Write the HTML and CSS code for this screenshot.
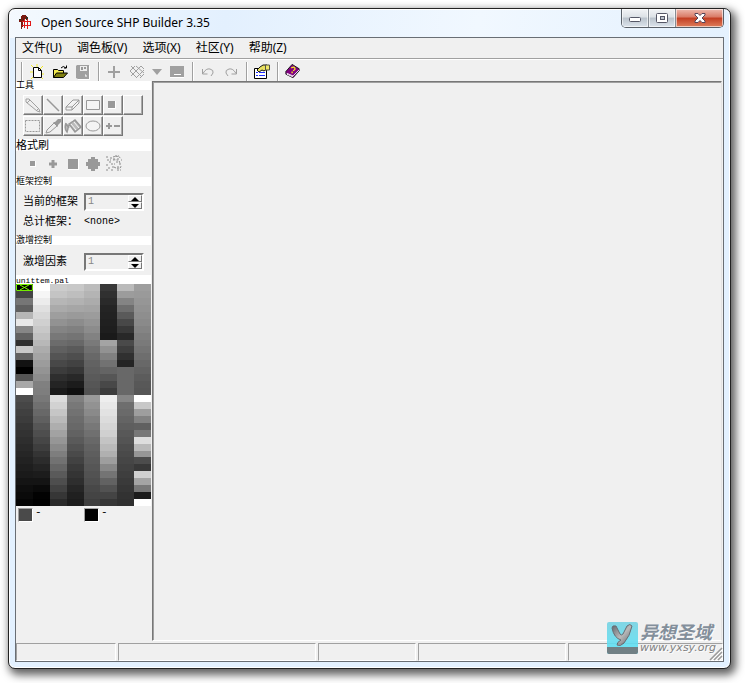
FILE: index.html
```
<!DOCTYPE html>
<html lang="zh-CN">
<head>
<meta charset="utf-8">
<title>Open Source SHP Builder 3.35</title>
<link rel="stylesheet" href="styles.css">
</head>
<body>
<div class="window">
  <header class="titlebar">
    <svg class="app-icon" width="16" height="16" viewBox="0 0 16 16" shape-rendering="crispEdges"><path fill="#7a1a10" d="M4 1h4v1h1v3H6v2H5v6H4v2H3V8H1V5h2V2h1z"/><path fill="#332" d="M1 5h2v1H1zM5 5h2v1H5zM8 3h2v3H8z"/><path fill="#e01818" d="M4 7h9v1H4zM4 11h9v1H4zM6 5h1v9H6zM9 5h1v10H9zM12 7h1v5h-1z"/></svg>
    <h1>Open Source SHP Builder 3.35</h1>
    <div class="caption">
      <button class="cap-button" aria-label="Minimize"><svg width="14" height="10" viewBox="0 0 14 10"><rect x="1.500" y="4.500" width="11" height="4" rx="1" fill="#fff" stroke="#555766"/></svg></button>
      <button class="cap-button" aria-label="Maximize"><svg width="14" height="12" viewBox="0 0 14 12"><rect x="1.500" y="1.500" width="11" height="9" rx="1" fill="#fff" stroke="#555766"/><rect x="5.500" y="4.500" width="4" height="3" fill="#bcc3cc" stroke="#555766"/></svg></button>
      <button class="cap-button close" aria-label="Close"><svg width="14" height="12" viewBox="0 0 14 12"><path d="M2 1.500h3l2 2 2-2h3v1.500l-3 3 3 3v1.500H9l-2-2-2 2H2V9l3-3-3-3z" fill="#fff" stroke="#554458"/></svg></button>
    </div>
  </header>
  <div class="client">
    <nav class="menu">
      <button>文件(U)</button><button>调色板(V)</button><button>选项(X)</button><button>社区(Y)</button><button>帮助(Z)</button>
    </nav>
    <div class="toolbar">
      <div class="group">
        <button aria-label="New"><svg width="16" height="16" viewBox="0 0 16 16"><path d="M2 1l3 3M8 0v3M14 2l-3 3M1 8h3M12 10h3M2 15l2-2M14 15l-2-2" stroke="#f4ec28"/><path d="M4.500 3.500h5l3 3v7h-8z" fill="#fff" stroke="#000"/><path d="M9.500 3.500v3h3" fill="none" stroke="#000"/></svg></button>
        <button aria-label="Open"><svg width="16" height="16" viewBox="0 0 16 16"><path d="M1.500 13.500v-8h4l1 1h5v3" fill="#f4ec50" stroke="#000"/><path d="M1.500 13.500l3-4.500h11l-4 4.500z" fill="#808010" stroke="#000"/><path d="M9 4q2-3 5 0M12 4h2.500V1.500" fill="none" stroke="#000"/></svg></button>
        <button aria-label="Save"><svg width="16" height="16" viewBox="0 0 16 16"><path d="M1 2l1-1h12v14H3l-2-1z" fill="#a0a0a0"/><path d="M5 2h7v5H5z" fill="#eee"/><path d="M6 3h2v3H6zM9 3h2v2H9z" fill="#999"/><path d="M14.500 2v13.500H3M10 11h1v2" fill="none" stroke="#fff"/></svg></button>
      </div>
      <div class="group">
        <button aria-label="Add"><svg width="16" height="16" viewBox="0 0 16 16"><path d="M8 2v12M2 8h12" stroke="#a0a0a0" stroke-width="2"/></svg></button>
        <button aria-label="Grid"><svg width="16" height="16" viewBox="0 0 16 16"><path d="M1 7l6 6M2 2l11 11M7 2l8 7M12 2l3 3M2 12L12 2M1 7l5-5M7 14l8-8M11 14l4-4" fill="none" stroke="#a0a0a0"/></svg></button>
        <button class="narrow" aria-label="Grid options"><svg width="12" height="16" viewBox="0 0 12 16"><path d="M1 5h10L6 11z" fill="#a0a0a0"/></svg></button>
        <button aria-label="Preview"><svg width="16" height="16" viewBox="0 0 16 16"><path d="M1 2h14v11H1z" fill="#a0a0a0"/><path d="M5 10.500h7M1 13.500h14" stroke="#fff"/></svg></button>
      </div>
      <div class="group">
        <button aria-label="Undo"><svg width="16" height="16" viewBox="0 0 16 16"><path d="M2.500 5v5h5M3 9.500Q6 4 10 5t3 4l-2 3" fill="none" stroke="#a0a0a0"/></svg></button>
        <button aria-label="Redo"><svg width="16" height="16" viewBox="0 0 16 16"><path d="M13.500 5v5h-5M13 9.500Q10 4 6 5T3 9l2 3" fill="none" stroke="#a0a0a0"/></svg></button>
      </div>
      <div class="group">
        <button aria-label="Preferences"><svg width="16" height="16" viewBox="0 0 16 16"><path d="M.5 4.500h12v10H.5z" fill="#fff" stroke="#000"/><path d="M2 8.500h2M5 8.500h6M2 11.500h2M5 11.500h6" stroke="#2030ff"/><path d="M3 6l3-3 3-2h4v4l-3 2-2-1-3 2z" fill="#e8e060" stroke="#111"/><path d="M11.500 1h4v5h-4z" fill="#f0e868" stroke="#554"/></svg></button>
      </div>
      <div class="group">
        <button aria-label="Help"><svg width="16" height="17" viewBox="0 0 18 18"><path d="M1 9l7-8 8 5v2l-7 8-8-4z" fill="#800080" stroke="#111"/><path d="M2 11l7 3 7-7M2 12l7 3" fill="none" stroke="#fff"/><path d="M7 5q3-2 4 0t-2 3M8 9v2" fill="none" stroke="#f8e820" stroke-width="1.500"/></svg></button>
      </div>
    </div>
    <main class="work">
      <aside class="side">
        <h2>工具</h2>
        <div class="tools">
          <button aria-label="Pencil"><svg width="18" height="16" viewBox="0 0 18 16"><path d="M2 2l3 0 10 10 1 3-3-1L2 5zM3 6l3-3M12 14l3-3" fill="#eee" stroke="#a0a0a0"/></svg></button>
          <button aria-label="Line"><svg width="18" height="16" viewBox="0 0 18 16"><path d="M3 2l12 12" stroke="#999" stroke-width="1.500"/></svg></button>
          <button aria-label="Eraser"><svg width="18" height="16" viewBox="0 0 18 16"><path d="M2 10l7-7h6v3l-7 7H2zM2 10h6l7-7M8 10v3" fill="#f4f4f4" stroke="#999"/></svg></button>
          <button aria-label="Rectangle"><svg width="18" height="16" viewBox="0 0 18 16"><path d="M2.500 3.500h13v9h-13z" fill="#f4f4f4" stroke="#999"/></svg></button>
          <button aria-label="Filled rectangle"><svg width="18" height="16" viewBox="0 0 18 16"><path d="M4 4h7v7H4z" fill="#999"/><path d="M4 11.500h7.500V4" fill="none" stroke="#fff"/></svg></button>
          <button aria-label="Blank"></button>
          <button aria-label="Select"><svg width="18" height="16" viewBox="0 0 18 16"><path d="M1.500 2.500h14v11h-14z" fill="none" stroke="#999" stroke-dasharray="2 1"/></svg></button>
          <button aria-label="Picker"><svg width="18" height="16" viewBox="0 0 18 16"><path d="M2 15l1-3 7-7 3 3-7 6z" fill="#eee" stroke="#999"/><path d="M9 4l2 0 3-3h3v3l-3 3v2z" fill="#999"/></svg></button>
          <button aria-label="Fill"><svg width="18" height="16" viewBox="0 0 18 16"><path d="M5 6l6-4 6 7-6 5zM2 6l3 4M2 5q-2 6 1 9l2-7" fill="#bbb" stroke="#999" stroke-width="1.500"/><path d="M7 6l5 6M10 4l5 6M4 2h5" stroke="#f8f8f8"/></svg></button>
          <button aria-label="Ellipse"><svg width="18" height="16" viewBox="0 0 18 16"><ellipse cx="9" cy="8" rx="7" ry="5" fill="#f4f4f4" stroke="#999"/></svg></button>
          <button aria-label="Lighten or darken"><svg width="18" height="16" viewBox="0 0 18 16"><path d="M2 8h6M5 5v6M10 8h6" stroke="#999" stroke-width="2"/></svg></button>
        </div>
        <h2 class="large">格式刷</h2>
        <div class="brushes">
          <button aria-label="Small brush"><svg width="16" height="16" viewBox="0 0 16 16"><path d="M5 5h6v6H5z" fill="#fff"/><path d="M5 5h5v5H5z" fill="#999"/></svg></button>
          <button aria-label="Cross brush"><svg width="16" height="16" viewBox="0 0 16 16"><path d="M8 4v8M4 8h8" stroke="#999" stroke-width="3"/></svg></button>
          <button aria-label="Square brush"><svg width="16" height="16" viewBox="0 0 16 16"><path d="M3 3h11v11H3z" fill="#fff"/><path d="M3 3h10v10H3z" fill="#999"/></svg></button>
          <button aria-label="Round brush"><svg width="16" height="16" viewBox="0 0 16 16"><path d="M6 1h4v2h3v3h2v4h-2v3h-3v2H6v-2H3v-3H1V6h2V3h3z" fill="#999"/></svg></button>
          <button aria-label="Spray brush"><svg width="18" height="18" viewBox="0 0 18 18"><path d="M1 2h2m2 1h3m2-2h4M2 5h4m2-1h2m2 0h3m1 1h1M4 7h3m4 0h4M1 10h2m3-1h4m4 0h3M3 13h2m2-1h3m2 0h4M1 15h3m2 0h2m4 0h4M8 2q6-2 8 2M8 5q7-1 7 4M9 12q5 3 8-1" fill="none" stroke="#8c8c8c" stroke-dasharray="2 1"/></svg></button>
        </div>
        <h2>框架控制</h2>
        <div class="fields">
          <label for="frame">当前的框架</label>
          <div class="spin"><input id="frame" value="1"><span class="arrows"><button aria-label="Next frame"><i class="up"></i></button><button aria-label="Previous frame"><i class="down"></i></button></span></div>
          <span>总计框架：</span><output>&lt;none&gt;</output>
        </div>
        <h2>激增控制</h2>
        <div class="fields single">
          <label for="zoom">激增因素</label>
          <div class="spin"><input id="zoom" value="1"><span class="arrows"><button aria-label="Zoom in"><i class="up"></i></button><button aria-label="Zoom out"><i class="down"></i></button></span></div>
        </div>
        <h2 class="file">unittem.pal</h2>
        <div class="palette" id="palette"></div>
        <div class="colours"><div><i class="swatch"></i><span>-</span></div><div><i class="swatch dark"></i><span>-</span></div></div>
      </aside>
      <section class="canvas" aria-label="Canvas"></section>
    </main>
    <footer class="status"><span></span><span></span><span></span><span></span><span></span>
      <svg class="grip" width="14" height="14" viewBox="0 0 14 14"><path d="M1 13L13 1M5 13l8-8M9 13l4-4" stroke="#999" stroke-width="1.500"/><path d="M3 13L13 3M7 13l6-6M11 13l2-2" stroke="#fff"/></svg>
    </footer>
    <div class="watermark">
      <svg width="31" height="32" viewBox="0 0 31 32"><defs><linearGradient id="sky" x2="0" y2="1"><stop stop-color="#77d3e3"/><stop offset="1" stop-color="#58e4f8"/></linearGradient><linearGradient id="steel" x2="1" y2="1"><stop stop-color="#50545c"/><stop offset=".5" stop-color="#b4b4b4"/><stop offset="1" stop-color="#50545c"/></linearGradient></defs><rect width="31" height="32" rx="2" fill="url(#sky)"/><path d="M0 25h31v5q0 2-2 2H2q-2 0-2-2z" fill="#64747a"/><path d="M5 6q0-3 4-2l4 8q1 2 3 0l4-8q3-3 5 0-2 10-8 17-4 4-7 2 0-3 4-5-7-2-9-12z" fill="url(#steel)" stroke="#596068"/></svg>
      <div><b>异想圣域</b><em>www.yxsy.org</em></div>
    </div>
  </div>
</div>
<script src="palette.js"></script>
</body>
</html>
```
FILE: styles.css
```
* { box-sizing: border-box; }
html, body { height: 100%; margin: 0; }
body {
  display: flex;
  padding: 8px 14px 14px 8px;
  overflow: hidden;
  background: #fff;
  color: #000;
  font: 12px/16px "Noto Sans", "Noto Sans CJK SC", sans-serif;
}
button {
  display: flex;
  align-items: center;
  justify-content: center;
  padding: 0;
  border: 0;
  background: none;
  color: inherit;
  font: inherit;
}
svg { display: block; flex: none; }
.window {
  flex: 1;
  display: flex;
  flex-direction: column;
  min-width: 0;
  padding: 0 6px 6px;
  border: 1px solid #222;
  border-radius: 7px;
  background: linear-gradient(100deg, #f4f9fe, #e3f0fe 30%, #f1f8ff 65%, #e4f1fe) 0 0 / 100% 29px no-repeat, #e3f1ff;
  box-shadow: inset 0 0 0 1px #fff, 3px 4px 9px 2px rgba(0, 0, 0, .62);
}
.titlebar { display: flex; align-items: flex-start; height: 28px; }
.app-icon { margin: 5px 7px 0 3px; }
h1 { flex: 1; margin: 6px 0 0; font: 12px/16px "Noto Sans", sans-serif; }
.caption {
  display: flex;
  border: 1px solid #596068;
  border-top: 0;
  border-radius: 0 0 5px 5px;
  overflow: hidden;
}
.cap-button {
  width: 27px;
  height: 18px;
  border-right: 1px solid #858c94;
  background: linear-gradient(#f2f4f6, #dce1e6 45%, #bac3cc 50%, #dce4ec);
  box-shadow: inset 0 0 0 1px rgba(255, 255, 255, .6);
}
.cap-button.close {
  width: 47px;
  border: 0;
  background: linear-gradient(#eebbb0, #d97965 45%, #c23d22 50%, #df7e5c);
}
.client {
  position: relative;
  flex: 1;
  display: flex;
  flex-direction: column;
  min-height: 0;
  border: 1px solid #696e74;
  background: #f0f0f0;
}
.menu {
  display: flex;
  gap: 15px;
  height: 21px;
  padding-left: 6px;
  border-bottom: 1px solid #a0a0a0;
}
.toolbar {
  display: flex;
  height: 22px;
  padding: 2px 0 0 5px;
  border-top: 1px solid #fff;
}
.group {
  display: flex;
  align-items: center;
  gap: 7px;
  height: 19px;
  padding: 0 7px;
  border-left: 1px solid #a0a0a0;
  box-shadow: inset 1px 0 #fff;
}
.narrow { margin: 0 -1px; }
.work { flex: 1; display: flex; min-height: 0; }
.side {
  flex: 0 0 135px;
  margin-right: 1px;
  font: 11px/12px "Liberation Mono", "Noto Sans CJK SC", monospace;
}
h2 {
  height: 9px;
  margin: 0;
  background: #fff;
  font: 9px/11px "Liberation Mono", "Noto Sans CJK SC", monospace;
}
h2.large { height: 12px; font-size: 11px; line-height: 14px; }
h2.file { font-family: "Liberation Mono", monospace; font-size: 8px; line-height: 11px; }
.tools {
  display: grid;
  grid-template-columns: repeat(6, 20px);
  grid-auto-rows: 20px;
  gap: 1px 0;
  height: 49px;
  padding: 5px 0 0 7px;
}
.tools button {
  border: 1px solid;
  border-color: #fff #777 #777 #fff;
  box-shadow: inset -1px -1px #a9a9a9;
}
.brushes { display: flex; align-items: center; gap: 4px; height: 26px; padding-left: 9px; }
.fields {
  display: grid;
  grid-template-columns: 61px 60px;
  grid-template-rows: 18px 22px;
  align-items: center;
  height: 50px;
  padding: 7px 0 0 7px;
}
.fields output { font-size: 10px; }
.fields.single { height: 30px; padding-top: 8px; }
.spin {
  display: flex;
  height: 18px;
  border: 2px solid;
  border-color: #777 #fff #fff #777;
}
.spin input {
  flex: 1;
  min-width: 0;
  padding: 0 2px;
  border: 0;
  background: #f0f0f0;
  color: #888;
  font: 10px/14px "Liberation Mono", monospace;
}
.arrows { display: grid; grid-template-rows: 1fr 1fr; width: 14px; }
.arrows button { border: 1px solid; border-color: #fff #777 #777 #fff; }
.up, .down { border: solid transparent; border-width: 0 4px; }
.up { border-bottom: 4px solid #000; }
.down { border-top: 4px solid #000; }
.palette {
  display: grid;
  grid-template-columns: repeat(8, 1fr);
  grid-template-rows: repeat(32, 1fr);
  grid-auto-flow: column;
  height: 222px;
}
.palette svg { width: 100%; height: 100%; }
.colours { display: flex; padding: 2px 0 0 2px; }
.colours div { display: flex; gap: 2px; width: 66px; line-height: 9px; }
.swatch {
  width: 15px;
  height: 14px;
  border: 1px solid;
  border-color: #a0a0a0 #fff #fff #a0a0a0;
  background: #4a4a4a;
}
.swatch.dark { background: #000; }
.canvas {
  flex: 1;
  border: 1px solid;
  border-color: #777 #e3e3e3 #fff #777;
  box-shadow: inset 1px 1px #a0a0a0;
  margin-right: 1px;
}
.status {
  display: grid;
  grid-template-columns: 100px 198px 98px 148px 1fr;
  gap: 2px;
  height: 20px;
  padding: 2px 0 0;
}
.status span { border: 1px solid; border-color: #a0a0a0 #fff #fff #a0a0a0; }
.grip { position: absolute; right: 0; bottom: 0; }
.watermark {
  position: absolute;
  right: 7px;
  bottom: 6px;
  display: flex;
  gap: 2px;
  opacity: .9;
}
.watermark div { display: flex; flex-direction: column; }
.watermark b {
  color: #788592;
  font: italic bold 18px/19px "Noto Sans CJK SC", sans-serif;
  text-shadow: 1px 1px #fff;
}
.watermark em { color: #777; font: italic 11px/14px "DejaVu Sans", sans-serif; text-shadow: 1px 1px #fff; }
```
FILE: palette.js
```
// Grey levels of the palette, one list per column, top to bottom.
const columns = [
  [0,68,118,96,182,232,134,98,48,200,98,18,0,84,168,255,76,70,64,60,54,50,46,42,38,34,30,26,20,14,10,5],
  [255,246,236,224,216,208,200,192,184,172,164,156,148,140,128,126,120,112,104,96,86,78,70,62,52,44,36,28,20,10,2,0],
  [204,196,182,170,158,146,132,120,108,96,84,72,60,46,36,26,220,210,198,186,174,162,150,138,126,114,102,90,78,66,54,42],
  [200,190,178,166,154,140,128,116,104,90,78,66,54,40,28,16,128,120,114,108,104,98,90,82,74,66,58,52,46,38,32,28],
  [188,180,172,164,156,148,140,130,122,112,104,98,94,90,86,82,154,146,138,128,120,112,104,98,94,90,86,82,78,72,68,62],
  [56,48,42,36,34,32,30,26,164,146,128,114,100,86,72,60,238,232,226,220,214,208,196,186,176,158,136,116,98,82,68,54],
  [186,156,132,110,90,72,56,40,74,62,48,36,104,104,104,104,134,110,106,100,94,88,84,78,74,70,66,62,58,54,50,48],
  [158,154,150,146,142,138,132,126,122,116,110,104,98,92,88,86,255,200,158,130,96,120,222,186,150,76,56,208,164,120,28,255]
];
const palette = document.getElementById("palette");
for (const level of columns.flat()) {
  const cell = document.createElement("span");
  cell.style.background = `rgb(${level}, ${level}, ${level})`;
  palette.append(cell);
}
// The first entry is the transparent colour.
palette.firstElementChild.innerHTML =
  '<svg viewBox="0 0 17 7" preserveAspectRatio="none"><path d="M.5.5h16v6H.5zM4 1l9 5M4 6l9-5" fill="#000" stroke="#7cfc00"/></svg>';
```
